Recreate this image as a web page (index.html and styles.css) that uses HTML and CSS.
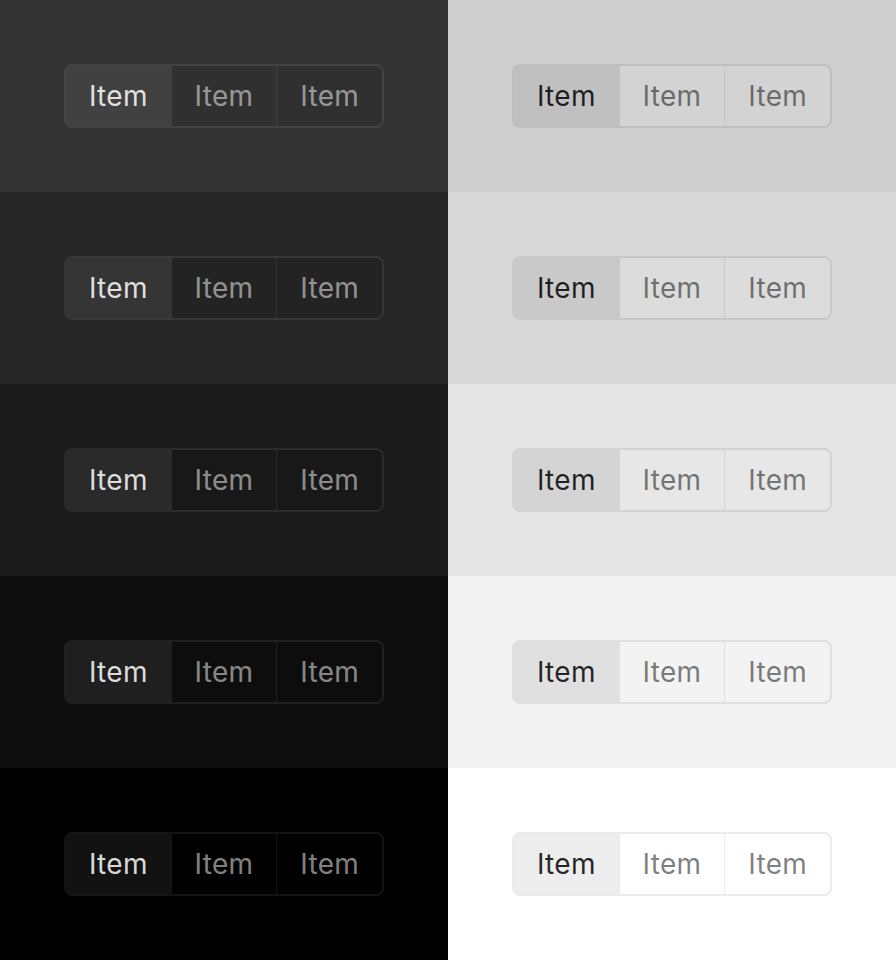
FILE: index.html
```html
<!DOCTYPE html>
<html>
<head>
<meta charset="utf-8">
<link rel="stylesheet" href="styles.css">
</head>
<body>
<div class="grid">
  <div class="cell dark d1"><div class="seg"><div class="item sel">Item</div><div class="item">Item</div><div class="item">Item</div></div></div>
  <div class="cell light l1"><div class="seg"><div class="item sel">Item</div><div class="item">Item</div><div class="item">Item</div></div></div>
  <div class="cell dark d2"><div class="seg"><div class="item sel">Item</div><div class="item">Item</div><div class="item">Item</div></div></div>
  <div class="cell light l2"><div class="seg"><div class="item sel">Item</div><div class="item">Item</div><div class="item">Item</div></div></div>
  <div class="cell dark d3"><div class="seg"><div class="item sel">Item</div><div class="item">Item</div><div class="item">Item</div></div></div>
  <div class="cell light l3"><div class="seg"><div class="item sel">Item</div><div class="item">Item</div><div class="item">Item</div></div></div>
  <div class="cell dark d4"><div class="seg"><div class="item sel">Item</div><div class="item">Item</div><div class="item">Item</div></div></div>
  <div class="cell light l4"><div class="seg"><div class="item sel">Item</div><div class="item">Item</div><div class="item">Item</div></div></div>
  <div class="cell dark d5"><div class="seg"><div class="item sel">Item</div><div class="item">Item</div><div class="item">Item</div></div></div>
  <div class="cell light l5"><div class="seg"><div class="item sel">Item</div><div class="item">Item</div><div class="item">Item</div></div></div>
</div>
</body>
</html>
```
FILE: styles.css
```css
* { box-sizing: border-box; }
html, body { margin: 0; padding: 0; }
body { font-family: Inter, "Noto Sans", sans-serif; }
.grid {
  display: grid;
  grid-template-columns: 448px 448px;
  grid-auto-rows: 192px;
  width: 896px;
}
.cell { padding: 64px; }
.d1 { background: #333333; }
.d2 { background: #262626; }
.d3 { background: #1a1a1a; }
.d4 { background: #0e0e0e; }
.d5 { background: #000000; }
.l1 { background: #cfcfcf; }
.l2 { background: #d9d9d9; }
.l3 { background: #e5e5e5; }
.l4 { background: #f2f2f2; }
.l5 { background: #ffffff; }
.seg {
  display: flex;
  width: 320px;
  height: 64px;
  border: 2px solid;
  border-radius: 8px;
  overflow: hidden;
}
.item {
  flex: 1 1 0;
  display: flex;
  align-items: center;
  justify-content: center;
  font-size: 28px;
  letter-spacing: 0.3px;
}
.item + .item { border-left: 1px solid; }
.dark .seg { border-color: rgba(255,255,255,0.08); }
.dark .item { color: rgba(255,255,255,0.52); background: rgba(0,0,0,0.06); }
.dark .item + .item { border-left-color: rgba(255,255,255,0.08); }
.dark .item.sel { color: rgba(255,255,255,0.85); background: rgba(255,255,255,0.07); }
.light .seg { border-color: rgba(0,0,0,0.08); }
.light .item { color: rgba(0,0,0,0.5); background: rgba(255,255,255,0.1); }
.light .item + .item { border-left-color: rgba(0,0,0,0.08); }
.light .item.sel { color: rgba(0,0,0,0.85); background: rgba(0,0,0,0.07); }
```
